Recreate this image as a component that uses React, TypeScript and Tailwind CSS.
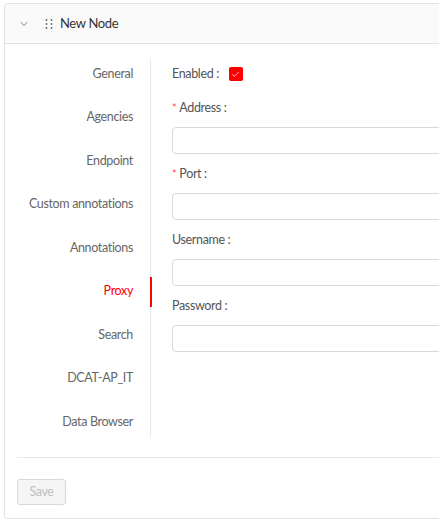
import React from "react";
import { ChevronDown, Check } from "lucide-react";

const tabs = [
  "General",
  "Agencies",
  "Endpoint",
  "Custom annotations",
  "Annotations",
  "Proxy",
  "Search",
  "DCAT-AP_IT",
  "Data Browser",
];

const fields = [
  { label: "Address", required: true },
  { label: "Port", required: true },
  { label: "Username", required: false },
  { label: "Password", required: false },
];

function DragHandle() {
  return (
    <svg width="8" height="10" viewBox="0 0 8 10" className="text-[#666]">
      {[1, 5, 9].map((y) => (
        <React.Fragment key={y}>
          <circle cx="1.5" cy={y} r="0.9" fill="currentColor" />
          <circle cx="6.5" cy={y} r="0.9" fill="currentColor" />
        </React.Fragment>
      ))}
    </svg>
  );
}

export default function App() {
  const active = "Proxy";

  return (
    <div
      className="w-[439px] h-[521px] overflow-hidden bg-white tracking-[-0.35px]"
      style={{ fontFamily: 'Lato, "Liberation Sans", Arial, sans-serif' }}
    >
      <div className="ml-[4px] mt-[3px] w-[470px] border border-[#e3e3e3] rounded-[3px] bg-white">
        {/* Header */}
        <div className="h-[40px] bg-[#fafafa] border-b border-[#e3e3e3] flex items-center pl-[13px] text-[13px] text-[#333]">
          <ChevronDown className="w-[12px] h-[12px] text-[#555]" strokeWidth={1.5} />
          <span className="ml-[15px] flex items-center">
            <DragHandle />
          </span>
          <span className="ml-[7px]">New Node</span>
        </div>

        {/* Body */}
        <div className="px-[12px] pt-[15px] pb-[13px]">
          <div className="flex">
            {/* Tabs */}
            <div className="w-[146px] shrink-0 border-r border-[#e8e8e8] -ml-[12px] flex flex-col gap-[13.5px]">
              {tabs.map((t) => {
                const isActive = t === active;
                return (
                  <div
                    key={t}
                    className={`relative h-[30px] flex items-center justify-end whitespace-nowrap pr-[17px] text-[12.5px] ${
                      isActive ? "text-[#ff0000]" : "text-[#666]"
                    }`}
                  >
                    {t}
                    {isActive && (
                      <span className="absolute right-[-2px] top-0 h-[30px] w-[2px] bg-[#ff0000]" />
                    )}
                  </div>
                );
              })}
            </div>

            {/* Form */}
            <div className="flex-1 pl-[21px] pt-[2px]">
              <div className="h-[26px] flex items-center text-[12.5px] text-[#555]">
                <span>Enabled :</span>
                <span className="ml-[10px] w-[14px] h-[14px] rounded-[2px] bg-[#ff0000] flex items-center justify-center">
                  <Check className="w-[9px] h-[9px] text-white" strokeWidth={2} />
                </span>
              </div>
              {fields.map((f, i) => (
                <div key={f.label} className={i === 0 ? "mt-[10px]" : "mt-[9px]"}>
                  <div className="h-[22px] flex items-center text-[12.5px] text-[#555]">
                    {f.required && (
                      <span className="text-[#ff4d4f] text-[11px] mr-[3px]">*</span>
                    )}
                    <span>{f.label} :</span>
                  </div>
                  <div className="mt-[8px] h-[27px] border border-[#d9d9d9] rounded-[4px] bg-white" />
                </div>
              ))}
            </div>
          </div>

          <div className="mt-[20px] border-t border-[#e8e8e8]" />

          <button
            disabled
            className="mt-[21px] h-[26px] w-[49px] border border-[#d9d9d9] rounded-[3px] bg-[#f5f5f5] text-[12.5px] text-[#bfbfbf]"
          >
            Save
          </button>
        </div>
      </div>
    </div>
  );
}
